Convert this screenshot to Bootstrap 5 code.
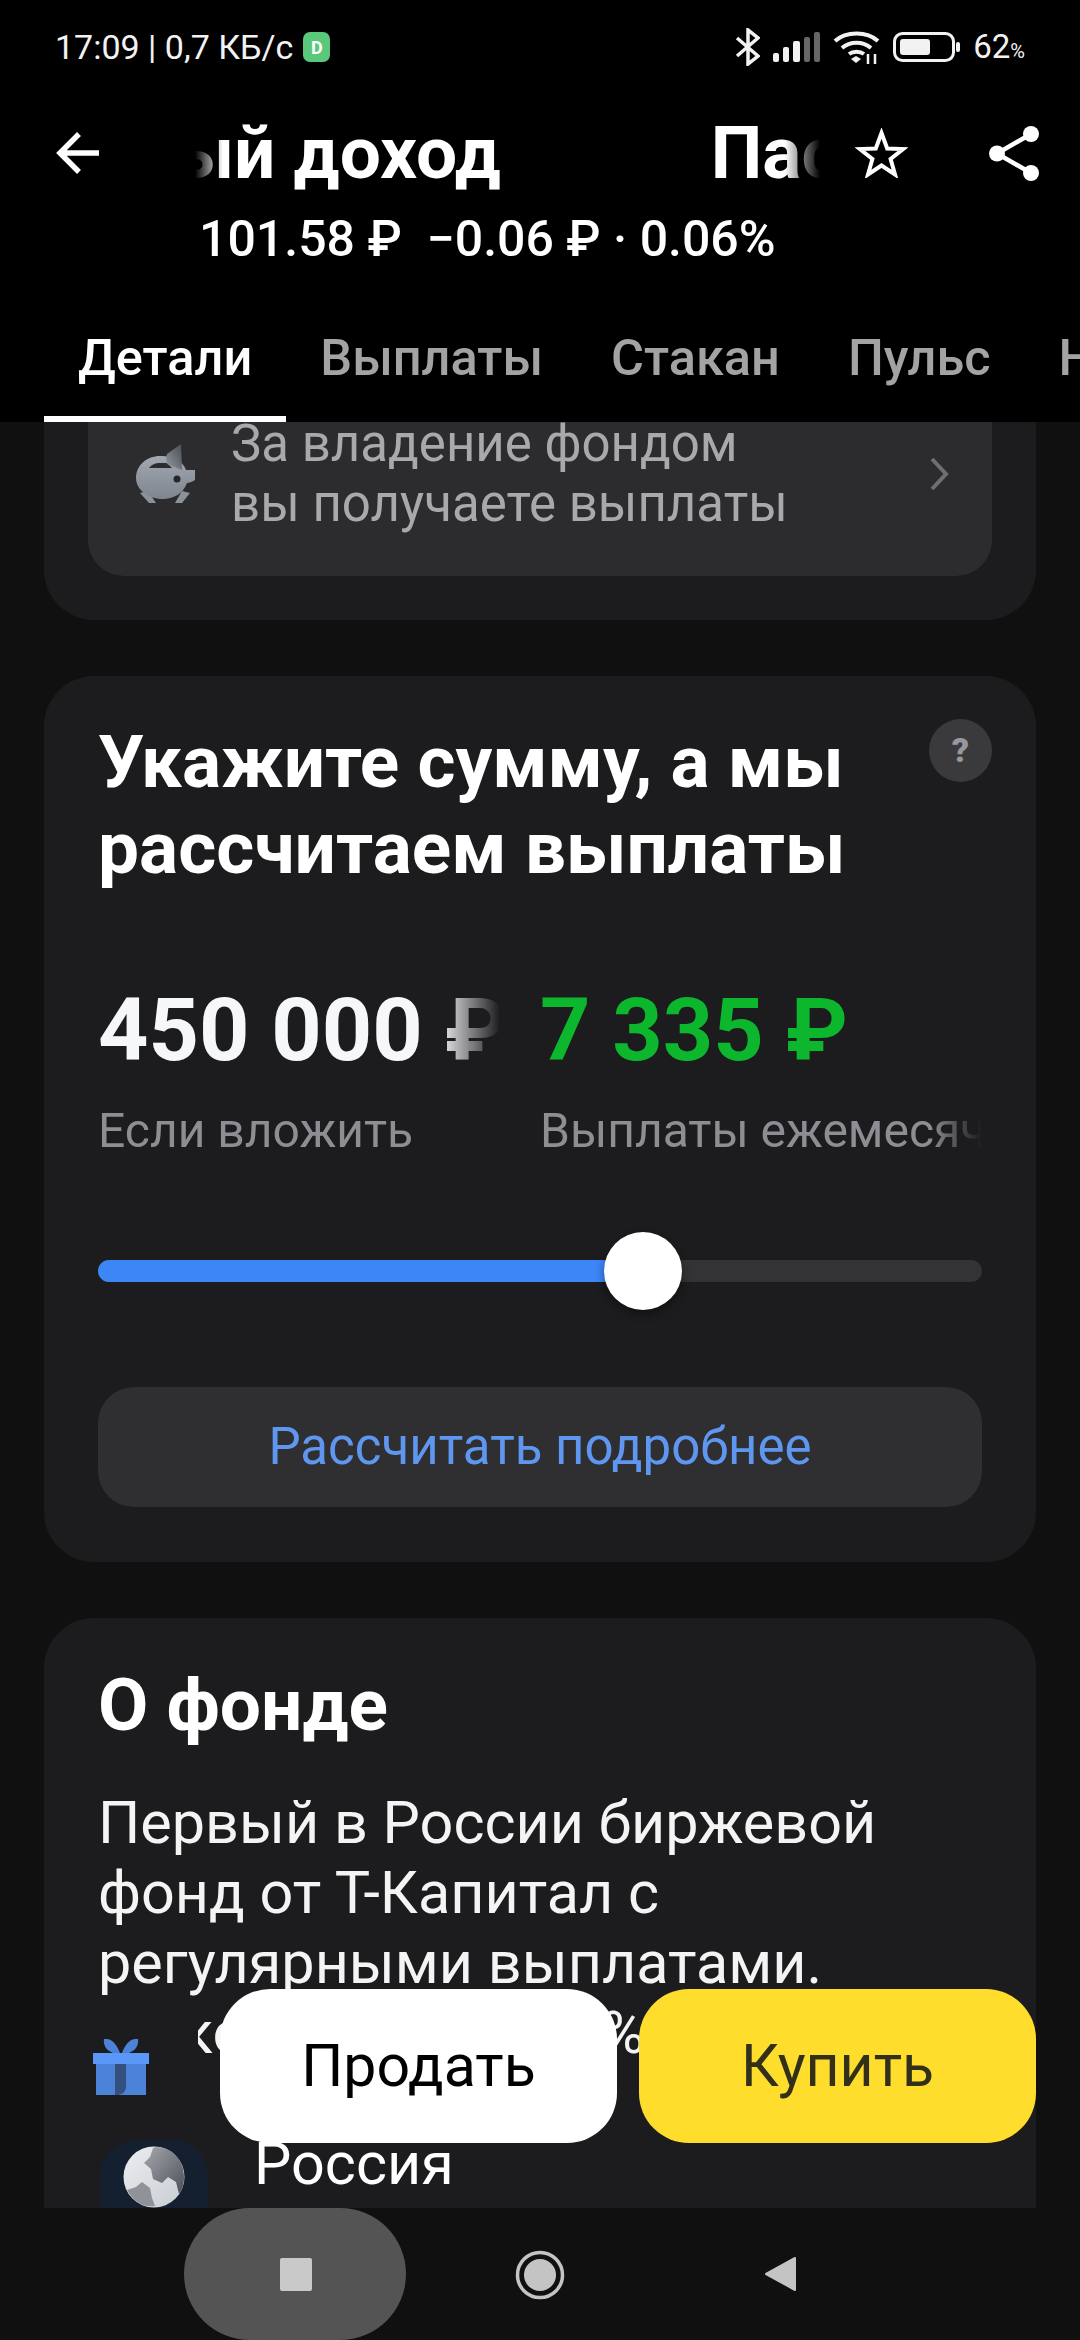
<!DOCTYPE html>
<html lang="ru">
<head>
    <meta charset="UTF-8">
    <meta name="viewport" content="width=device-width, initial-scale=1.0">
    <title>Пассивный доход</title>
    <link href="https://cdn.jsdelivr.net/npm/bootstrap@5.3.0/dist/css/bootstrap.min.css" rel="stylesheet">
    <style>
        html, body {
            height: 2340px;
            overflow: hidden;
        }
        body {
            background: #101011;
            color: #fff;
            font-family: Roboto, "Liberation Sans", sans-serif;
        }
        .screen {
            width: 1080px;
            height: 2340px;
            position: relative;
            overflow: hidden;
        }
        .app-top {
            background: #000;
            height: 422px;
        }
        .status-bar {
            height: 94px;
            padding: 0 55px 0 55px;
            font-size: 34px;
            color: #f2f2f2;
        }
        .status-badge {
            width: 27px;
            height: 30px;
            border-radius: 7px;
            background: #5ac87a;
            color: #fff;
            font-size: 18px;
            font-weight: 700;
            margin-left: 10px;
        }
        .status-right svg {
            margin-right: 13px;
        }
        .status-pct {
            font-size: 33px;
        }
        .status-pct span {
            font-size: 20px;
        }
        .title-row {
            height: 96px;
            margin-top: 11px;
        }
        .back-btn {
            width: 195px;
            padding-left: 56px;
        }
        .back-btn svg {
            display: block;
        }
        .title-clip {
            width: 625px;
            overflow: hidden;
            white-space: nowrap;
            font-size: 73px;
            font-weight: 700;
            line-height: 96px;
            -webkit-mask-image: linear-gradient(90deg, transparent 0, #000 28px, #000 590px, transparent 625px);
            mask-image: linear-gradient(90deg, transparent 0, #000 28px, #000 590px, transparent 625px);
        }
        .title-track {
            margin-left: -312px;
            gap: 210px;
        }
        .star-icon {
            margin-left: 35px;
        }
        .share-icon {
            margin-left: 81px;
        }
        .price-line {
            margin-top: 11px;
            padding-left: 199px;
            font-size: 50px;
            font-weight: 500;
            line-height: 54px;
            white-space: pre;
        }
        .tabs-row {
            margin-top: 59px;
            padding-left: 44px;
            height: 97px;
            white-space: nowrap;
            overflow: hidden;
        }
        .tab-item {
            padding: 3px 34px 0;
            font-size: 50.5px;
            font-weight: 500;
            line-height: 60px;
            color: #a3a3a5;
            border-bottom: 6px solid transparent;
        }
        .tab-item.on {
            color: #fff;
            border-bottom-color: #fff;
        }
        .scroll-area {
            height: 1786px;
            overflow: hidden;
            padding: 0 44px;
        }
        .panel {
            background: #1c1c1e;
            border-radius: 50px;
            margin-bottom: 56px;
        }
        .panel-first {
            margin-top: -50px;
            padding: 0 44px;
            height: 248px;
        }
        .promo-box {
            height: 204px;
            background: #2c2c2e;
            border-radius: 0 0 36px 36px;
            padding: 0 43px 0 47px;
            color: #a9a9ab;
            font-size: 51px;
            line-height: 60px;
        }
        .promo-text {
            margin-left: 36px;
            margin-top: 0;
        }
        .calc-panel {
            height: 886px;
            padding: 43px 54px 0;
            position: relative;
        }
        .calc-title {
            font-size: 73px;
            font-weight: 700;
            line-height: 86px;
            margin: 0;
        }
        .help-dot {
            position: absolute;
            top: 43px;
            right: 44px;
            width: 63px;
            height: 63px;
            border-radius: 50%;
            background: #3a3a3c;
            color: #97979c;
            font-size: 34px;
            font-weight: 900;
        }
        .sums {
            margin-top: 89px;
            gap: 40px;
            white-space: nowrap;
        }
        .sum-left {
            width: 402px;
            overflow: hidden;
            -webkit-mask-image: linear-gradient(90deg, #000 340px, transparent 402px);
            mask-image: linear-gradient(90deg, #000 340px, transparent 402px);
        }
        .sum-right {
            width: 442px;
            overflow: hidden;
            -webkit-mask-image: linear-gradient(90deg, #000 390px, transparent 442px);
            mask-image: linear-gradient(90deg, #000 390px, transparent 442px);
        }
        .sum-value {
            font-size: 88px;
            font-weight: 700;
            line-height: 100px;
            color: #f6f7f8;
        }
        .sum-value.green {
            color: #0cb72e;
        }
        .sum-label {
            font-size: 48px;
            line-height: 56px;
            color: #8d8e93;
            margin-top: 23px;
        }
        .slider-wrap {
            position: relative;
            height: 22px;
            margin-top: 101px;
            border-radius: 11px;
            background: #333335;
        }
        .slider-fill {
            height: 22px;
            border-radius: 11px;
            background: #3c86f7;
        }
        .slider-knob {
            position: absolute;
            top: -28px;
            left: 506px;
            width: 78px;
            height: 78px;
            border-radius: 50%;
            background: #fff;
            box-shadow: 0 4px 10px rgba(0, 0, 0, .4);
        }
        .calc-btn {
            display: block;
            width: 100%;
            height: 120px;
            margin-top: 105px;
            border: 0;
            border-radius: 36px;
            background: #2f2f31;
            color: #5f97f0;
            font-size: 51px;
        }
        .about-panel {
            padding: 44px 54px 0;
            height: 700px;
            margin-bottom: 0;
        }
        .about-title {
            font-size: 73px;
            font-weight: 700;
            line-height: 86px;
            margin: 0;
        }
        .about-text {
            font-size: 59.3px;
            line-height: 70px;
            margin-top: 40px;
            color: #f4f4f4;
        }
        .fact-line {
            font-size: 59.3px;
            line-height: 70px;
            color: #f4f4f4;
            width: 447px;
            margin-left: 100px;
            overflow: hidden;
        }
        .fact-line span:first-child {
            margin-left: -17px;
        }
        .region-row {
            gap: 46px;
            margin-top: 72px;
            margin-left: 2px;
            font-size: 59.3px;
            line-height: 70px;
        }
        .region-row span {
            margin-top: -11px;
        }
        .bottom-actions {
            position: absolute;
            top: 1989px;
            left: 220px;
            gap: 22px;
        }
        .act-btn {
            width: 397px;
            height: 154px;
            border: 0;
            border-radius: 50px;
            font-size: 59px;
        }
        .act-sell {
            background: #fff;
            color: #000;
        }
        .act-buy {
            background: #ffdd2d;
            color: #33301a;
        }
        .gift-icon {
            position: absolute;
            top: 2039px;
            left: 93px;
        }
        .nav-bar {
            height: 132px;
            background: #101011;
            position: relative;
        }
        .nav-pill {
            position: absolute;
            left: 184px;
            top: 0;
            width: 222px;
            height: 132px;
            border-radius: 66px;
            background: #545454;
        }
        .nav-stop {
            position: absolute;
            left: 280px;
            top: 50px;
            width: 32px;
            height: 33px;
            border-radius: 2px;
            background: #c9c9c9;
        }
        .nav-home {
            position: absolute;
            left: 515px;
            top: 42px;
        }
        .nav-back {
            position: absolute;
            left: 764px;
            top: 48px;
        }
    </style>
</head>
<body>
    <div class="screen">
        <div class="app-top">
            <!-- status bar -->
            <div class="status-bar d-flex align-items-center justify-content-between">
                <div class="d-flex align-items-center">
                    <span>17:09 | 0,7 КБ/с</span>
                    <span class="status-badge d-flex align-items-center justify-content-center">D</span>
                </div>
                <div class="status-right d-flex align-items-center">
                    <svg width="25" height="38" viewBox="0 0 25 38" fill="none" stroke="#f2f2f2" stroke-width="3.5"><path d="M2 10l21 18-10 8V2l10 8L2 28"/></svg>
                    <svg width="47" height="30" viewBox="0 0 47 30"><g fill="#f2f2f2"><rect x="0" y="21" width="6" height="9" rx="2"/><rect x="10" y="15" width="6" height="15" rx="2"/><rect x="20" y="9" width="7" height="21" rx="2"/></g><g fill="#666"><rect x="31" y="5" width="6" height="25" rx="2"/><rect x="41" y="0" width="6" height="30" rx="2"/></g></svg>
                    <svg width="47" height="33" viewBox="0 0 47 33" fill="none" stroke="#f2f2f2" stroke-width="4"><path d="M2 10C13 0 34 0 45 10"/><path d="M9 17c8-7 21-7 29 0"/><path d="M16 23c4-3 11-3 15 0"/><path d="M18 28l5-3 5 3-5 4z" fill="#f2f2f2" stroke="none"/><path d="M35 23v10M42 23v10" stroke-width="2.5"/></svg>
                    <svg width="67" height="30" viewBox="0 0 67 30"><rect x="1.5" y="1.5" width="59" height="27" rx="8" fill="none" stroke="#f2f2f2" stroke-width="3"/><rect x="7" y="7" width="30" height="16" rx="3" fill="#f2f2f2"/><rect x="63" y="10" width="4" height="10" rx="2" fill="#f2f2f2"/></svg>
                    <div class="status-pct">62<span>%</span></div>
                </div>
            </div>

            <!-- title -->
            <div class="title-row d-flex align-items-center">
                <div class="back-btn">
                    <svg width="43" height="42" viewBox="0 0 43 42" fill="none" stroke="#fff" stroke-width="5.5"><path d="M43 21H4M23 2L4 21l19 19"/></svg>
                </div>
                <div class="title-clip">
                    <div class="title-track d-flex"><span>Пассивный доход</span><span>Пассивный доход</span></div>
                </div>
                <svg class="star-icon" width="53" height="50" viewBox="0 0 53 50" fill="none" stroke="#fff" stroke-width="4" stroke-linejoin="miter"><path d="M26.5 5l5.7 15.5 16 .5-12.6 10 4.4 15.5-13.5-9-13.5 9 4.4-15.5L4.8 21l16-.5z"/></svg>
                <svg class="share-icon" width="50" height="55" viewBox="0 0 50 55" fill="#fff"><path d="M42 8L8 27.500l34 19.500" fill="none" stroke="#fff" stroke-width="4.500"/><circle cx="42" cy="8" r="8"/><circle cx="8" cy="27.500" r="8"/><circle cx="42" cy="47" r="8"/></svg>
            </div>
            <div class="price-line">101.58 ₽  −0.06 ₽ · 0.06%</div>

            <!-- tabs -->
            <div class="tabs-row d-flex">
                <div class="tab-item on">Детали</div>
                <div class="tab-item">Выплаты</div>
                <div class="tab-item">Стакан</div>
                <div class="tab-item">Пульс</div>
                <div class="tab-item">Новости</div>
            </div>
        </div>

        <div class="scroll-area">
            <div class="panel panel-first">
                <div class="promo-box d-flex align-items-center">
                    <svg width="60" height="60" viewBox="0 0 60 60">
                        <defs>
                            <linearGradient id="pigBody" x1="0" y1="0" x2="0" y2="1"><stop offset="0" stop-color="#a2a8b1"/><stop offset="1" stop-color="#7f858e"/></linearGradient>
                            <linearGradient id="pigEar" x1="1" y1="0" x2="0" y2="1"><stop offset="0" stop-color="#4a4c50"/><stop offset="1" stop-color="#9298a1"/></linearGradient>
                        </defs>
                        <path d="M5 49l9 10h7l-8-12zM47 47l-7 12h7l8-10z" fill="#8d929a"/>
                        <path d="M25 12c7 0 13 1 19 5 4 3 6 6 7 9h9v10c-3 2-6 3-8 3-4 11-14 16-24 16C12 55 1 45 1 34 1 21 12 12 25 12z" fill="url(#pigBody)"/>
                        <path d="M14 24c3-4 7-5 11-5h7l5 5z" fill="#2c2c2e"/>
                        <path d="M46 0l1 26-15-6c-1-4-1-7 0-10z" fill="url(#pigEar)"/>
                        <circle cx="42" cy="35" r="3.500" fill="#23262c"/>
                    </svg>
                    <div class="promo-text">За владение фондом<br>вы получаете выплаты</div>
                    <svg class="ms-auto" width="20" height="36" viewBox="0 0 20 36" fill="none" stroke="#6f6f72" stroke-width="4"><path d="M3 3l14 15L3 33"/></svg>
                </div>
            </div>

            <div class="panel calc-panel">
                <h2 class="calc-title">Укажите сумму, а мы<br>рассчитаем выплаты</h2>
                <div class="help-dot d-flex align-items-center justify-content-center">?</div>
                <div class="sums d-flex">
                    <div class="sum-left">
                        <div class="sum-value">450 000 ₽</div>
                        <div class="sum-label">Если вложить</div>
                    </div>
                    <div class="sum-right">
                        <div class="sum-value green">7 335 ₽</div>
                        <div class="sum-label">Выплаты ежемесячно</div>
                    </div>
                </div>
                <div class="slider-wrap">
                    <div class="slider-fill" style="width: 60%"></div>
                    <div class="slider-knob"></div>
                </div>
                <button class="calc-btn" type="button">Рассчитать подробнее</button>
            </div>

            <div class="panel about-panel">
                <h2 class="about-title">О фонде</h2>
                <div class="about-text">Первый в России биржевой<br>фонд от Т-Капитал с<br>регулярными выплатами.</div>
                <div class="fact-line d-flex justify-content-between"><span>ко</span><span>%</span></div>
                <div class="region-row d-flex align-items-start">
                    <svg width="108" height="108" viewBox="0 0 108 108">
                        <defs>
                            <linearGradient id="globeFill" x1="0" y1="0" x2="1" y2="1"><stop offset="0" stop-color="#eceef0"/><stop offset="1" stop-color="#c9ccd1"/></linearGradient>
                            <linearGradient id="globeLand" x1="0" y1="0" x2="1" y2="1"><stop offset="0" stop-color="#a5a9af"/><stop offset="1" stop-color="#4d5056"/></linearGradient>
                        </defs>
                        <rect width="108" height="108" rx="36" fill="#14202f"/>
                        <circle cx="54" cy="37" r="30.500" fill="url(#globeFill)"/>
                        <path d="M56 7c16 0 28 13 28 30 0 8-2 13-5 17l-3-12-8-5-6 6-9-4-2-10-7-6 6-6 3-9z" fill="url(#globeLand)"/>
                        <path d="M27 50l9-3 6-5 8 6 2 10 3 8c-12 2-22-5-28-16z" fill="#8f9399"/>
                    </svg>
                    <span>Россия</span>
                </div>
            </div>
        </div>

        <svg class="gift-icon" width="56" height="56" viewBox="0 0 56 56">
            <path d="M11 0c6-1 12 3 16 14h-7C14 12 10 7 11 0zM45 0c-6-1-12 3-16 14h7c6-2 10-7 9-14z" fill="#4d82d9"/>
            <rect x="3" y="25" width="50" height="31" fill="#4d82d9"/>
            <path d="M22 25h11v23c0 4-3 8-8 8h-3z" fill="#34507f"/>
            <path d="M33 25h20v23c0 5-4 8-9 8H25c5 0 8-4 8-8z" fill="#4d82d9"/>
            <rect x="0" y="14" width="56" height="11" fill="#5b97f7"/>
        </svg>

        <div class="bottom-actions d-flex">
            <button class="act-btn act-sell" type="button">Продать</button>
            <button class="act-btn act-buy" type="button">Купить</button>
        </div>

        <div class="nav-bar">
            <div class="nav-pill"></div>
            <div class="nav-stop"></div>
            <svg class="nav-home" width="50" height="50" viewBox="0 0 50 50" fill="none"><circle cx="25" cy="25" r="22.500" stroke="#c4c4c4" stroke-width="3.500"/><circle cx="25" cy="25" r="16" fill="#c4c4c4"/></svg>
            <svg class="nav-back" width="33" height="36" viewBox="0 0 33 36"><path d="M31 2v32L2 18z" fill="#c4c4c4" stroke="#c4c4c4" stroke-width="2" stroke-linejoin="round"/></svg>
        </div>
    </div>
    <script src="https://cdn.jsdelivr.net/npm/bootstrap@5.3.0/dist/js/bootstrap.bundle.min.js"></script>
</body>
</html>
